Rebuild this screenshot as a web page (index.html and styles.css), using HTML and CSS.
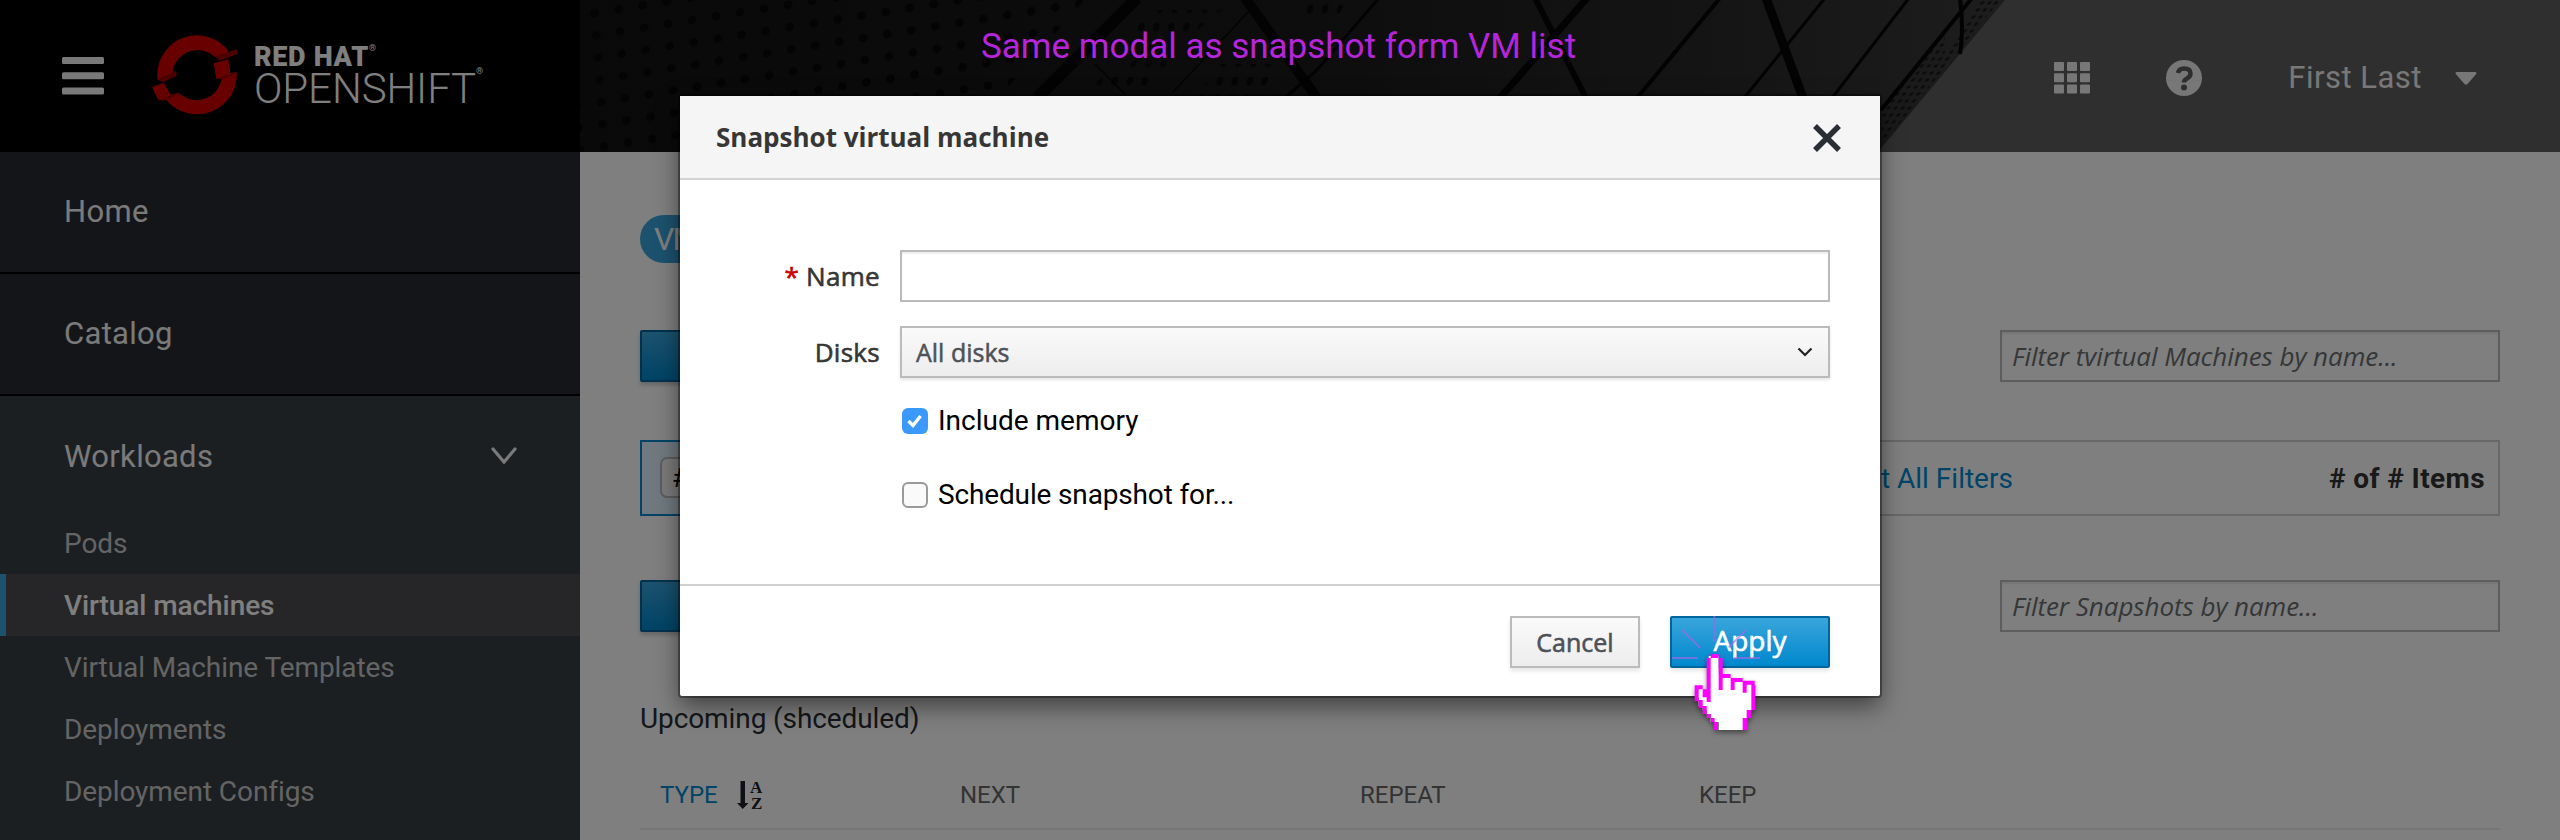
FILE: index.html
```html
<!DOCTYPE html>
<html lang="en">
<head>
<meta charset="utf-8">
<title>Snapshot virtual machine</title>
<link rel="stylesheet" href="styles.css">
</head>
<body>
<div class="app">
  <header class="masthead">
    <div class="brand">
      <svg class="burger" width="42" height="38" viewBox="0 0 42 38"><g fill="#f2f2f2"><rect width="42" height="7" rx="1.5"/><rect y="15.2" width="42" height="7" rx="1.5"/><rect y="30.4" width="42" height="7" rx="1.5"/></g></svg>
      <svg class="logo" width="88" height="82" viewBox="34 44 264 246">
        <path fill="#d20000" d="M53 181V160A119.500 119.500 0 0 1 264 91L266 99L226 113A76 76 0 0 0 98 162L72 188Z"/>
        <path fill="#d20000" d="M222 132L266 120L272 162L291 158A119.500 119.500 0 0 1 80 242L56 242L37 203L72 190L92 226L118 221A76 76 0 0 0 246 177L230 178Z"/>
        <path fill="#9c0000" d="M226 113L290 90L295 103L240 124ZM53 178L110 155L111 169L72 188ZM230 178L291 157V164L246 180ZM56 242L112 221L122 226L70 244Z"/>
      </svg>
      <div class="wordmark">
        <div class="redhat">RED HAT<sup>®</sup></div>
        <div class="openshift">OPENSHIFT<sup>®</sup></div>
      </div>
    </div>
    <div class="banner">
      <svg class="photo" width="1980" height="152" viewBox="580 0 1980 152">
        <defs>
          <linearGradient id="wall" x1="580" x2="1990" y1="0" y2="0" gradientUnits="userSpaceOnUse"><stop offset="0" stop-color="#131313"/><stop offset=".5" stop-color="#1a1a1a"/><stop offset=".8" stop-color="#292929"/><stop offset="1" stop-color="#3a3a3a"/></linearGradient>
          <pattern id="dots" width="24" height="22.5" patternUnits="userSpaceOnUse" patternTransform="translate(588 6) skewY(-9) skewX(4)"><circle cx="6" cy="8" r="4.4" fill="#080808"/></pattern>
          <pattern id="holes" width="15" height="18" patternUnits="userSpaceOnUse" patternTransform="skewX(-12)"><ellipse cx="7" cy="9" rx="3.2" ry="4.5" fill="#0a0a0a"/></pattern>
          <pattern id="mesh" width="7" height="7" patternUnits="userSpaceOnUse" patternTransform="skewX(-32)"><circle cx="3" cy="3" r="1.9" fill="#181818"/></pattern>
        </defs>
        <rect x="580" width="1980" height="152" fill="#5e5e5e"/>
        <path fill="url(#wall)" d="M580 0H2005L1878 152H580Z"/>
        <path fill="url(#dots)" d="M580 0H1085L1000 96V152H580Z"/>
        <path fill="url(#holes)" d="M1148 10H1222L1190 36H1130ZM1136 60H1170L1145 90H1080ZM1300 0H1346L1336 22H1305ZM1220 64H1275L1260 98H1195Z"/>
        <path fill="url(#mesh)" d="M1980 0H2000L1882 145V108L1945 28V58Z"/>
        <g fill="none" stroke="#060606">
          <path stroke-width="12" d="M1137-2L1037 98"/>
          <path stroke-width="10" d="M1245-2L1317 98"/>
          <path stroke-width="1.5" d="M1250 10L1173 92M1095 64L1125 94"/>
          <path stroke-width="3" d="M1379-2L1317 70L1285 98M1825-2L1744 98M1909-2L1832 98"/>
          <path stroke-width="7" d="M1587-2L1500 98"/>
          <path stroke-width="6" d="M1535-2L1586 98"/>
          <path stroke-width="4" d="M1720-2L1637 98M1972-2L1881 110M1960-2Q1964 30 1960 54"/>
          <path stroke-width="9" d="M1766-2L1803 98"/>
        </g>
      </svg>
      <div class="tools">
        <svg class="grid-icon" width="36" height="32" viewBox="0 0 36 32"><g fill="#eee"><rect width="10" height="9" rx="1"/><rect x="13" width="10" height="9" rx="1"/><rect x="26" width="10" height="9" rx="1"/><rect y="11.3" width="10" height="9" rx="1"/><rect x="13" y="11.3" width="10" height="9" rx="1"/><rect x="26" y="11.3" width="10" height="9" rx="1"/><rect y="22.6" width="10" height="9" rx="1"/><rect x="13" y="22.6" width="10" height="9" rx="1"/><rect x="26" y="22.6" width="10" height="9" rx="1"/></g></svg>
        <svg class="help-icon" width="36" height="36" viewBox="0 0 36 36"><circle cx="18" cy="18" r="18" fill="#eee"/><path d="M12 13Q13 8.500 18 8.500Q24.500 8.500 24.500 13.500Q24.500 16.500 21 18.500Q18 20 18 22.500" fill="none" stroke="#5c5c5c" stroke-width="4.500"/><circle cx="18" cy="27.500" r="3" fill="#5c5c5c"/></svg>
        <span class="user">First Last</span>
        <svg class="caret" width="22" height="13" viewBox="0 0 22 13"><path fill="#eee" d="M1.500 0H20.500Q22 .5 21.200 2L12.500 12Q11 13.500 9.500 12L.8 2Q0 .5 1.500 0Z"/></svg>
      </div>
    </div>
  </header>

  <div class="below">
    <nav class="sidebar">
      <a class="section">Home</a>
      <a class="section">Catalog</a>
      <div class="group">
        <a class="group-title"><span>Workloads</span><svg width="26" height="18" viewBox="0 0 26 18"><path d="M2 2L13 15L24 2" fill="none" stroke="#f4f4f4" stroke-width="3.200" stroke-linecap="round"/></svg></a>
        <a class="item">Pods</a>
        <a class="item active">Virtual machines</a>
        <a class="item">Virtual Machine Templates</a>
        <a class="item">Deployments</a>
        <a class="item">Deployment Configs</a>
      </div>
    </nav>
    <main class="content">
      <div class="title-row"><span class="kind">VM</span></div>
      <div class="action-row"><span class="create">Create</span><div class="filter">Filter tvirtual Machines by name...</div></div>
      <div class="status-bar">
        <div class="status-pick"><span class="chip">#</span></div>
        <div class="status-rest"><span class="reset">Reset All Filters</span><span class="count"># of # Items</span></div>
      </div>
      <div class="action-row second"><span class="create">Create</span><div class="filter">Filter Snapshots by name...</div></div>
      <div class="upcoming">Upcoming (shceduled)</div>
      <div class="thead">
        <div class="sorted"><span>TYPE</span>
          <svg class="sort-icon" width="27" height="29" viewBox="0 0 27 29"><path fill="#20232a" d="M3.500 0H8V22H11.500L5.800 28L0 22H3.500Z"/><g class="az"><text x="13" y="12">A</text><text x="14" y="28">Z</text></g></svg>
        </div>
        <div>NEXT</div><div>REPEAT</div><div>KEEP</div>
      </div>
    </main>
  </div>

  <div class="backdrop"></div>
  <div class="note">Same modal as snapshot form VM list</div>

  <section class="modal">
    <div class="modal-head"><h1>Snapshot virtual machine</h1>
      <svg width="30" height="28" viewBox="0 0 30 28"><path d="M3 2L27 26M27 2L3 26" fill="none" stroke="#292e34" stroke-width="5.500"/></svg></div>
    <div class="modal-body">
      <label class="lab"><i>*</i><span>Name</span></label><div class="field"></div>
      <label class="lab row2"><span>Disks</span></label>
      <div class="field select row2"><span>All disks</span><svg width="16" height="10" viewBox="0 0 16 10"><path d="M1.500 1.500L8 8L14.500 1.500" fill="none" stroke="#222" stroke-width="2.200"/></svg></div>
      <div class="check c1"><svg width="26" height="26" viewBox="0 0 26 26"><rect width="26" height="26" rx="6" fill="#3b99fc"/><path d="M6.500 13L11 17.500L18.500 8" fill="none" stroke="#fff" stroke-width="3.400"/></svg><span>Include memory</span></div>
      <div class="check c2"><svg width="26" height="26" viewBox="0 0 26 26"><rect x="1" y="1" width="24" height="24" rx="5" fill="#fafafa" stroke="#9a9a9a" stroke-width="2"/></svg><span>Schedule snapshot for...</span></div>
    </div>
    <div class="modal-foot"><button class="cancel">Cancel</button><button class="apply">Apply</button></div>
  </section>

  <svg class="pointer" width="180" height="140" viewBox="0 0 540 420">
    <g stroke="#a366e6" stroke-opacity=".65" stroke-width="6"><path d="M163 18V96M36 144H114M222 144H300M66 60L121 114M258 60L206 112"/></g>
    <g class="hand">
      <path fill="#fff" d="M152 138H176V192H212V204H248V216H280V300H268V324H260V360H176V336H152V312H140V300H128V288H116V264H108V232H130V244H146V138Z"/>
      <path fill="#f0f" d="M152 132h24v12h-24zM140 144h12v132h-12zM176 144h12v96h-12zM188 192h24v12h-24zM212 204h12v36h-12zM224 204h24v12h-24zM248 212h12v36h-12zM260 212h24v12h-24zM274 224h12v76h-12zM104 226h24v12h-24zM104 238h12v36h-12zM128 238h12v24h-12zM116 270h12v24h-12zM128 288h12v24h-12zM140 312h12v12h-12zM152 324h12v12h-12zM162 336h12v24h-12zM260 300h14v24h-14zM248 324h14v36h-14z"/>
    </g>
  </svg>
</div>
</body>
</html>
```
FILE: styles.css
```css
* { box-sizing: border-box; }
body { margin: 0; font-family: Roboto, "Liberation Sans", sans-serif; background: #fff; }
.app { position: relative; width: 2560px; height: 840px; overflow: hidden; display: flex; flex-direction: column; }

.masthead { display: flex; height: 152px; flex: none; }
.brand { width: 580px; background: #000; display: flex; align-items: flex-start; padding: 34px 0 0 62px; color: #fff; }
.burger { margin-top: 23px; }
.logo { margin-left: 47px; }
.wordmark { margin: 9px 0 0 15px; white-space: nowrap; }
.redhat { font-size: 27px; font-weight: 900; line-height: 29px; letter-spacing: .7px; }
.openshift { font-size: 42px; font-weight: 300; line-height: 34px; letter-spacing: -.1px; }
.wordmark sup { font-size: 9px; font-weight: 400; letter-spacing: 0; line-height: 0; position: relative; }
.redhat sup { top: -5px; }
.openshift sup { top: -14px; }
.banner { flex: 1; display: grid; }
.banner > * { grid-area: 1 / 1; }
.photo { display: block; }
.tools { position: relative; display: flex; align-items: center; justify-content: flex-end; padding: 4px 83px 0 0; }
.help-icon { margin-left: 76px; }
.user { font-size: 31px; line-height: 40px; margin: 0 33px 0 86px; letter-spacing: .5px; color: #f0f0f0; }

.below { display: flex; flex: 1; }
.sidebar { width: 580px; background: #363e44; }
.section { display: block; height: 122px; line-height: 120px; padding-left: 64px; font-size: 31px; letter-spacing: .3px; background: #292b32; border-bottom: 2px solid #000; color: #f4f4f4; }
.group-title { display: flex; justify-content: space-between; align-items: center; height: 116px; padding: 4px 63px 0 64px; font-size: 31px; letter-spacing: .3px; color: #f4f4f4; }
.item { display: block; height: 62px; line-height: 63px; padding-left: 64px; font-size: 28px; letter-spacing: -.08px; color: #c8c8c8; }
.item.active { background: #4d4d53; color: #fff; border-left: 6px solid #39a5dc; padding-left: 58px; font-weight: 500; }

.content { flex: 1; padding: 63px 60px 0; display: flex; flex-direction: column; }
.kind { display: block; width: 90px; height: 48px; line-height: 48px; border-radius: 24px; background: #39a5dc; color: #fff; font-size: 32px; letter-spacing: -2px; padding-left: 14px; }
.action-row { display: flex; justify-content: space-between; margin-top: 67px; }
.action-row.second { margin-top: 64px; }
.create { width: 200px; height: 52px; border: 2px solid #00659c; border-radius: 2px; background: linear-gradient(#39a5dc, #0088ce); box-shadow: 0 3px 4px rgba(0,0,0,.2); color: #fff; font: 26px/48px "Open Sans", sans-serif; text-align: center; }
.filter { width: 500px; height: 52px; border: 2px solid #bbb; box-shadow: inset 0 2px 2px rgba(0,0,0,.08); padding-left: 10px; font: italic 26px/48px "Open Sans", sans-serif; letter-spacing: -.05px; color: #6b6e71; white-space: nowrap; }
.status-bar { display: flex; margin-top: 58px; height: 76px; }
.status-pick { width: 300px; border: 2px solid #0088ce; background: #def3ff; padding: 15px 0 0 18px; }
.chip { display: block; width: 100px; height: 41px; line-height: 38px; border: 2px solid #bbb; border-radius: 7px; background: #f5f5f5; padding-left: 10px; font-size: 26px; }
.status-rest { flex: 1; border: 2px solid #d1d1d1; border-left: 0; display: flex; justify-content: flex-end; line-height: 74px; padding-right: 13px; font-size: 28px; }
.reset { color: #0088ce; margin-right: 316px; }
.count { font-weight: 700; letter-spacing: .4px; color: #333; }
.upcoming { margin-top: 67px; line-height: 40px; font-size: 28px; letter-spacing: -.1px; color: #292e34; }
.thead { display: grid; grid-template-columns: 300px 400px 339px 1fr; padding: 0 0 0 20px; margin-top: 23px; height: 68px; line-height: 67px; border-bottom: 2px solid #ededed; font-size: 24px; color: #666; }
.sorted { display: flex; align-items: center; gap: 19px; color: #0088ce; }
.sort-icon { overflow: visible; }
.az { font: 700 17px "Liberation Serif", serif; fill: #20232a; }

.backdrop { position: absolute; inset: 0; background: rgba(0,0,0,.5); }
.note { position: absolute; left: 981px; top: 27px; line-height: 40px; font-size: 35px; color: #b625dc; white-space: nowrap; }

.modal { position: absolute; left: 680px; top: 96px; width: 1200px; height: 600px; background: #fff; border-radius: 2px; box-shadow: 0 0 0 2px rgba(0,0,0,.35), 0 10px 24px rgba(0,0,0,.5); font-family: "Open Sans", sans-serif; color: #363636; display: flex; flex-direction: column; }
.modal-head { height: 84px; background: #f5f5f5; border-bottom: 2px solid #d1d1d1; display: flex; justify-content: space-between; align-items: center; padding: 2px 38px 0 36px; }
.modal-head h1 { margin: 0 0 2px; font-size: 26px; font-weight: 700; line-height: 40px; }
.modal-body { height: 404px; padding: 70px 50px 0 0; display: grid; grid-template-columns: 220px 930px; align-content: start; }
.lab { height: 52px; line-height: 52px; font-size: 26px; text-align: right; padding-right: 20px; letter-spacing: .3px; -webkit-text-stroke: .6px; }
.lab i { font-style: normal; color: #c00; margin-right: 7px; }
.row2 { margin-top: 24px; }
.field { height: 52px; border: 2px solid #bbb; box-shadow: inset 0 2px 2px rgba(0,0,0,.07); }
.select { display: flex; justify-content: space-between; align-items: center; padding: 0 15px 0 14px; font-size: 25px; line-height: 46px; -webkit-text-stroke: .5px; color: #4d5258; background: linear-gradient(#fafafa, #ededed); box-shadow: 0 2px 3px rgba(0,0,0,.1); }
.check { grid-column: 2; display: flex; align-items: center; gap: 10px; height: 30px; padding-left: 2px; font: 28px/30px Roboto, sans-serif; color: #000; }
.c1 { margin-top: 28px; }
.c2 { margin-top: 44px; letter-spacing: -.15px; }
.modal-foot { height: 112px; border-top: 2px solid #d1d1d1; display: flex; justify-content: flex-end; gap: 30px; padding: 30px 50px 0 0; }
.modal-foot button { height: 52px; padding: 0; font: 25px/46px "Open Sans", sans-serif; border: 2px solid #bbb; box-shadow: 0 3px 4px rgba(0,0,0,.1); -webkit-text-stroke: .6px; }
.cancel { width: 130px; color: #4d5258; background: linear-gradient(#fafafa, #ededed); }
.modal-foot .apply { width: 160px; font-size: 28px; line-height: 42px; padding-bottom: 4px; color: #fff; border-color: #00659c; border-radius: 2px; background: linear-gradient(#39a5dc, #0088ce); }

.pointer { position: absolute; left: 1660px; top: 610px; overflow: visible; }
.hand { filter: drop-shadow(0 8px 8px rgba(0,0,0,.45)); }
```
